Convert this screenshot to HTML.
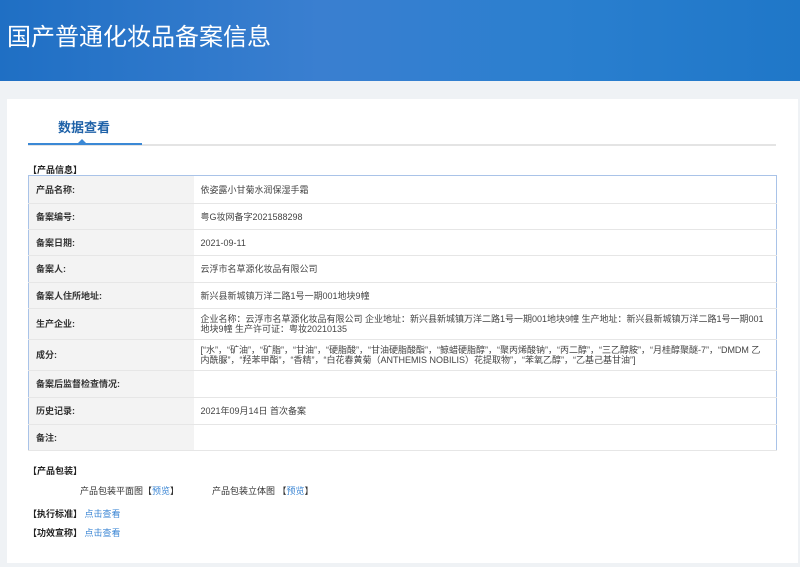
<!DOCTYPE html>
<html><head><meta charset="utf-8"><style>
*{margin:0;padding:0;box-sizing:border-box}
body{width:800px;height:567px;overflow:hidden;background:#eff2f5;font-family:"Liberation Sans","Noto Sans CJK SC",sans-serif;font-size:9px;color:#444;position:relative}
.hd{position:absolute;left:0;top:0;width:800px;height:81px;background:linear-gradient(90deg,#1f6fc4 0%,#3a7fd0 40%,#2a7fcf 70%,#1f77c8 100%)}
.hd h1{position:absolute;left:7px;top:17px;font-size:24px;font-weight:normal;color:#fff;font-family:"Noto Sans CJK SC",sans-serif}
.pn{position:absolute;left:7px;top:99px;width:791px;height:464px;background:#fff}
.tab{position:absolute;left:58px;top:117px;font-size:13px;color:#1f62a8;font-weight:bold}
.ln{position:absolute;left:28px;top:144px;width:748px;height:2px;background:#e4e4e4}
.ln2{position:absolute;left:28px;top:143px;width:114px;height:2px;background:#3b88d5}
.tri{position:absolute;left:78px;top:139px;border:4px solid transparent;border-bottom-color:#3b88d5;border-top:0;width:0;height:0}
.sec{position:absolute;font-weight:bold;color:#222;font-size:9px}
table{position:absolute;left:28px;top:175px;width:749px;border-collapse:collapse;border:1px solid #a9c3e8}
td{border-bottom:1px solid #e6e6e6;padding:0 7px;vertical-align:middle;line-height:10px}
td.l{width:165px;background:#f3f3f3;font-weight:bold;color:#333}
.a{color:#3d87d4}
.t{position:absolute;font-size:9px;color:#333}
</style></head><body>
<div class="hd"><h1>国产普通化妆品备案信息</h1></div>
<div class="pn"></div>
<div class="tab">数据查看</div>
<div class="ln"></div><div class="ln2"></div><div class="tri"></div>
<div class="sec" style="left:28px;top:163px">【产品信息】</div>
<table>
<tr style="height:28px"><td class="l">产品名称:</td><td>依姿露小甘菊水润保湿手霜</td></tr>
<tr style="height:26px"><td class="l">备案编号:</td><td>粤G妆网备字2021588298</td></tr>
<tr style="height:26px"><td class="l">备案日期:</td><td>2021-09-11</td></tr>
<tr style="height:27px"><td class="l">备案人:</td><td>云浮市名草源化妆品有限公司</td></tr>
<tr style="height:26px"><td class="l">备案人住所地址:</td><td>新兴县新城镇万洋二路1号一期001地块9幢</td></tr>
<tr style="height:31px"><td class="l">生产企业:</td><td>企业名称：云浮市名草源化妆品有限公司 企业地址：新兴县新城镇万洋二路1号一期001地块9幢 生产地址：新兴县新城镇万洋二路1号一期001地块9幢 生产许可证：粤妆20210135</td></tr>
<tr style="height:31px"><td class="l">成分:</td><td>[“水”，“矿油”，“矿脂”，“甘油”，“硬脂酸”，“甘油硬脂酸酯”，“鲸蜡硬脂醇”，“聚丙烯酸钠”，“丙二醇”，“三乙醇胺”，“月桂醇聚醚-7”，“DMDM 乙内酰脲”，“羟苯甲酯”，“香精”，“白花春黄菊（ANTHEMIS NOBILIS）花提取物”，“苯氧乙醇”，“乙基己基甘油”]</td></tr>
<tr style="height:27px"><td class="l">备案后监督检查情况:</td><td></td></tr>
<tr style="height:27px"><td class="l">历史记录:</td><td>2021年09月14日 首次备案</td></tr>
<tr style="height:26px"><td class="l">备注:</td><td></td></tr>
</table>
<div class="sec" style="left:28px;top:464px">【产品包装】</div>
<div class="t" style="left:80px;top:484px">产品包装平面图【<span class="a">预览</span>】</div>
<div class="t" style="left:212px;top:484px">产品包装立体图 【<span class="a">预览</span>】</div>
<div class="sec" style="left:28px;top:507px">【执行标准】 <span class="a" style="font-weight:normal">点击查看</span></div>
<div class="sec" style="left:28px;top:526px">【功效宣称】 <span class="a" style="font-weight:normal">点击查看</span></div>
</body></html>
